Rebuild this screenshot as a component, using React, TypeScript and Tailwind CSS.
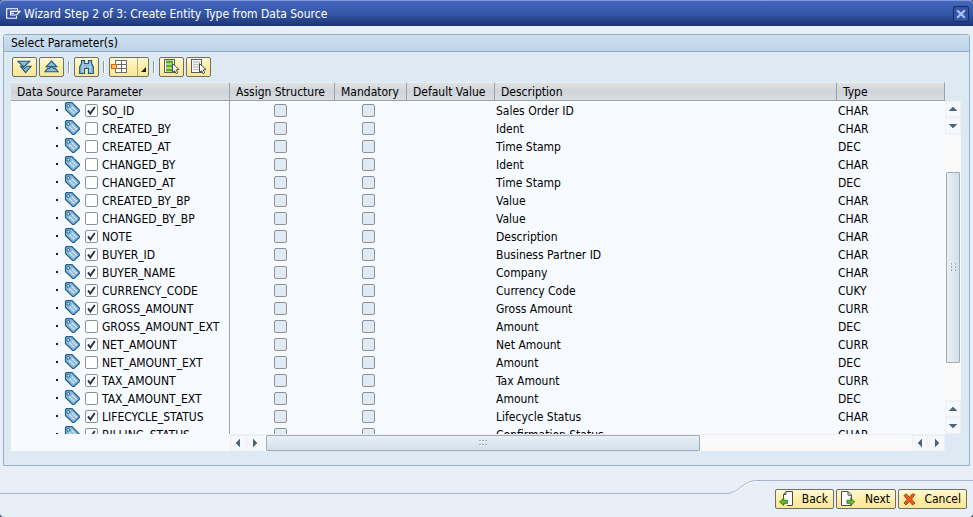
import React from "react";

type Row = { name: string; checked: boolean; description: string; type: string };

const rows: Row[] = [
  { name: "SO_ID", checked: true, description: "Sales Order ID", type: "CHAR" },
  { name: "CREATED_BY", checked: false, description: "Ident", type: "CHAR" },
  { name: "CREATED_AT", checked: false, description: "Time Stamp", type: "DEC" },
  { name: "CHANGED_BY", checked: false, description: "Ident", type: "CHAR" },
  { name: "CHANGED_AT", checked: false, description: "Time Stamp", type: "DEC" },
  { name: "CREATED_BY_BP", checked: false, description: "Value", type: "CHAR" },
  { name: "CHANGED_BY_BP", checked: false, description: "Value", type: "CHAR" },
  { name: "NOTE", checked: true, description: "Description", type: "CHAR" },
  { name: "BUYER_ID", checked: true, description: "Business Partner ID", type: "CHAR" },
  { name: "BUYER_NAME", checked: true, description: "Company", type: "CHAR" },
  { name: "CURRENCY_CODE", checked: true, description: "Currency Code", type: "CUKY" },
  { name: "GROSS_AMOUNT", checked: true, description: "Gross Amount", type: "CURR" },
  { name: "GROSS_AMOUNT_EXT", checked: false, description: "Amount", type: "DEC" },
  { name: "NET_AMOUNT", checked: true, description: "Net Amount", type: "CURR" },
  { name: "NET_AMOUNT_EXT", checked: false, description: "Amount", type: "DEC" },
  { name: "TAX_AMOUNT", checked: true, description: "Tax Amount", type: "CURR" },
  { name: "TAX_AMOUNT_EXT", checked: false, description: "Amount", type: "DEC" },
  { name: "LIFECYCLE_STATUS", checked: true, description: "Lifecycle Status", type: "CHAR" },
  { name: "BILLING_STATUS", checked: true, description: "Confirmation Status", type: "CHAR" },
];

const columns = [
  "Data Source Parameter",
  "Assign Structure",
  "Mandatory",
  "Default Value",
  "Description",
  "Type",
];

const buttonLook =
  "flex h-5 items-center rounded-[2px] border border-[#716f63] bg-linear-to-b from-[#fffbd6] via-[#fdeea6] to-[#fae798]";

function TagIcon() {
  return (
    <svg width="17" height="16" viewBox="0 0 17 16" className="shrink-0">
      <path d="M1.5 1.5 L2.5 0.7 H8 L15.3 8 V9.5 L10 14.4 H8.6 L1.5 7.5 Z" fill="#8db9d8" stroke="#1a6190" strokeWidth="1.2" />
      <circle cx="4.3" cy="3.8" r="1.4" fill="#f4faff" stroke="#1a5a88" strokeWidth="1" />
      <path d="M5.6 6.6 L10.4 11.4 M8 5 L12.8 9.6" stroke="#f4faff" strokeWidth="1.2" strokeDasharray="1.7 0.6" />
    </svg>
  );
}

function DoubleChevron({ up }: { up?: boolean }) {
  return (
    <svg width="15" height="14" viewBox="0 0 15 14" fill="#8fbbd6" stroke="#1b5c86" strokeWidth="1.1">
      {up ? (
        <>
          <path d="M7.5 1 L12.8 6.6 H2.2 Z" />
          <path d="M3.6 8.4 L0.8 11.8 H14.2 L11.4 8.4 H9.6 L7.5 6.4 L5.4 8.4 Z" />
        </>
      ) : (
        <>
          <path d="M0.7 1.2 H12.8 L6.8 7 Z" />
          <path d="M3.4 6.4 H5 L7.4 8.6 L10 6.2 H14.2 L8.6 12.6 Z" />
        </>
      )}
    </svg>
  );
}

function BinocularsIcon() {
  return (
    <svg width="15" height="16" viewBox="0 0 15 16">
      <path d="M2.5 1.5 H5.5 V4.5 H9.5 V1.5 H12.5 V4.5 L14.3 8 V14.5 H9.5 V9.5 H5.5 V14.5 H0.7 V8 L2.5 4.5 Z" fill="#8fbbd6" stroke="#1b5c86" strokeWidth="1.2" />
      <path d="M4 4 V13 M11 4 V13" stroke="#c2dcec" strokeWidth="1" />
    </svg>
  );
}

function LayoutIcon() {
  return (
    <svg width="17" height="14" viewBox="0 0 17 14">
      <path d="M4.5 0.5 H15.5 V12.5 H4.5 Z" fill="#ffffff" />
      <path d="M4 0.5 H16 M4 4.5 H16 M4 8.5 H16 M4 12.5 H16 M4.5 0 V13 M10.5 0 V13 M15.5 0 V13" stroke="#6c6c6c" />
      <rect x="0.5" y="4.5" width="5" height="4" fill="#ffc64a" stroke="#e4601c" />
    </svg>
  );
}

function SelectIcon({ active }: { active?: boolean }) {
  const bar = active ? "#5cae1c" : "#c3c3c3";
  return (
    <svg width="16" height="16" viewBox="0 0 16 16">
      <rect x="0.5" y="0.5" width="10" height="13" fill="#ffffff" stroke="#5c5c5c" />
      <path
        d={active ? "M2 3 H9 M2 7 H9 M2 11 H8" : "M2 3 H9 M2 5.5 H9 M2 8 H8 M2 10.5 H8"}
        stroke={bar}
        strokeWidth={active ? 3 : 1.4}
      />
      <path d="M8.5 4.5 L15 10.5 L12.3 10.8 L13.7 13.8 L12 14.6 L10.6 11.8 L8.5 13.5 Z" fill="#ffffff" stroke="#4c4c4c" />
    </svg>
  );
}

function PageArrowIcon({ back }: { back?: boolean }) {
  return (
    <svg width="16" height="16" viewBox="0 0 16 16">
      {back ? (
        <>
          <path d="M4.5 9 V3.5 L7 0.5 H13.5 V14.5 H8" fill="#ffffff" stroke="#4c4c4c" />
          <path d="M4.5 3.5 H7 V1" fill="none" stroke="#4c4c4c" />
          <path d="M0.6 10.8 L4.8 7.2 V9.3 H8.5 V12.3 H4.8 V14.6 Z" fill="#6ab82c" stroke="#2c7616" strokeWidth="0.9" />
        </>
      ) : (
        <>
          <path d="M1.5 0.5 H8 L11.5 4 V14.5 H1.5 Z" fill="#ffffff" stroke="#4c4c4c" />
          <path d="M8 0.5 V4.2 H11.5" fill="none" stroke="#4c4c4c" />
          <path d="M14.6 10.8 L10.6 7.2 V9.3 H7 V12.3 H10.6 V14.6 Z" fill="#6ab82c" stroke="#2c7616" strokeWidth="0.9" />
        </>
      )}
    </svg>
  );
}

function CancelIcon() {
  return (
    <svg width="13" height="13" viewBox="0 0 13 13">
      <path d="M1 2.5 L3.2 0.8 L6.4 4.2 L9.4 0.8 L12 1.6 L8.6 6.2 L12 10.2 L9.6 12 L6.4 8.6 L3 12 L1 10 L4.2 6.4 Z" fill="#e65a1c" stroke="#b43a12" strokeWidth="0.9" />
    </svg>
  );
}

function Separator() {
  return <span className="mx-1 h-3 w-[2px] border-r border-l border-r-white border-l-[#94999e]" />;
}

function CheckBox({ label, checked, disabled }: { label: string; checked?: boolean; disabled?: boolean }) {
  return (
    <span className="relative block size-[13px] shrink-0">
      <input
        type="checkbox"
        aria-label={label}
        defaultChecked={checked}
        disabled={disabled}
        className="block size-[13px] appearance-none rounded-[2px] border border-[#8f9195] bg-white disabled:bg-[#dfeaf4]"
      />
      {checked && (
        <svg width="13" height="13" viewBox="0 0 13 13" className="pointer-events-none absolute inset-0">
          <path d="M3 6.4 L5.3 9.6 L9.8 3" fill="none" stroke="#2f2f4c" strokeWidth="1.9" />
        </svg>
      )}
    </span>
  );
}

type Direction = "up" | "down" | "left" | "right";

const arrowPaths: Record<Direction, string> = {
  up: "M4 0 L8 4 H0 Z",
  down: "M0 0 H8 L4 4 Z",
  left: "M4 0 V8 L0 4 Z",
  right: "M0 0 L4 4 L0 8 Z",
};

function ScrollButton({ direction }: { direction: Direction }) {
  const vertical = direction === "up" || direction === "down";
  return (
    <button
      type="button"
      aria-label={"Scroll " + direction}
      className="flex size-4 shrink-0 items-center justify-center border border-[#eceff4] bg-[#f5f8fc]"
    >
      <svg width={vertical ? 8 : 4} height={vertical ? 4 : 8} className="shrink-0">
        <path d={arrowPaths[direction]} fill="#4e6474" stroke="#4e6474" strokeWidth="0.6" />
      </svg>
    </button>
  );
}

function Grip() {
  return (
    <svg width="8" height="6" className="shrink-0">
      <path d="M0 0.5 H2 M3 0.5 H5 M6 0.5 H8 M0 4.5 H2 M3 4.5 H5 M6 4.5 H8" stroke="#9db0c2" />
      <path d="M1 1.5 H2 M4 1.5 H5 M7 1.5 H8 M1 5.5 H2 M4 5.5 H5 M7 5.5 H8" stroke="#ffffff" />
    </svg>
  );
}

function TitleBar() {
  return (
    <header className="flex h-[26px] shrink-0 items-center rounded-t-[4px] border-t border-[#7f9ad6] bg-linear-to-b from-[#4468be] via-[#3556a6] to-[#1c3575] pr-1 pl-[6px] text-white">
      <svg width="15" height="11" viewBox="0 0 15 11" fill="none" stroke="#ffffff" strokeWidth="1.1" className="mr-[3px]">
        <path d="M11.5 2.5 V0.7 H0.7 V10.3 H10.5 V8" />
        <path d="M6.5 3.4 H13.8 L10.6 7 H4.6 V3.4 H6.5 M4.6 5.2 H8" />
      </svg>
      <h1 className="flex-1 text-[12px] leading-4">Wizard Step 2 of 3: Create Entity Type from Data Source</h1>
      <button
        type="button"
        aria-label="Close"
        className="flex size-4 items-center justify-center rounded-[2px] border border-[#152c66] bg-[#3355a4]"
      >
        <svg width="10" height="10" viewBox="0 0 10 10">
          <path d="M1.2 1.2 L8.8 8.8 M8.8 1.2 L1.2 8.8" stroke="#a9c4f4" strokeWidth="2.2" />
        </svg>
      </button>
    </header>
  );
}

function Toolbar() {
  return (
    <div className="flex items-center py-[5px] pl-px">
      <button type="button" aria-label="Expand all" className={buttonLook + " w-[25px] justify-center"}>
        <DoubleChevron />
      </button>
      <button type="button" aria-label="Collapse all" className={buttonLook + " ml-[2px] w-[25px] justify-center"}>
        <DoubleChevron up />
      </button>
      <Separator />
      <button type="button" aria-label="Find" className={buttonLook + " w-[25px] justify-center"}>
        <BinocularsIcon />
      </button>
      <Separator />
      <button type="button" aria-label="Layout" className={buttonLook + " w-10 pl-px"}>
        <LayoutIcon />
        <span className="ml-[9px] h-full w-px bg-[#b8ab74]" />
        <svg width="5" height="5" className="mt-1 ml-[3px]">
          <path d="M5 0 V5 H0 Z" fill="#1c1c1c" />
        </svg>
      </button>
      <Separator />
      <button type="button" aria-label="Select all" className={buttonLook + " w-[25px] justify-center"}>
        <SelectIcon active />
      </button>
      <button type="button" aria-label="Deselect all" className={buttonLook + " ml-[2px] w-[25px] justify-center"}>
        <SelectIcon />
      </button>
    </div>
  );
}

function ParameterTable() {
  return (
    <table className="w-full table-fixed border-separate border-spacing-0">
      <colgroup>
        <col className="w-[219px]" />
        <col className="w-[105px]" />
        <col className="w-[72px]" />
        <col className="w-[88px]" />
        <col />
        <col className="w-[108px]" />
      </colgroup>
      <thead>
        <tr>
          {columns.map((column) => (
            <th
              key={column}
              className="h-[19px] border-t border-r border-b border-t-[#eceef0] border-r-[#98a3b1] border-b-[#98a3b1] bg-linear-to-b from-[#dfe2e5] via-[#cfd4da] to-[#dcdee0] p-0 pl-[6px] text-left text-[12px] leading-4 font-normal whitespace-nowrap"
            >
              {column}
            </th>
          ))}
        </tr>
      </thead>
      <tbody>
        {rows.map((row) => (
          <tr key={row.name} className="h-[18px] text-[12px] leading-4">
            <td className="border-r border-[#98a3b1] p-0">
              <label className="flex h-[18px] items-center pl-[45px]">
                <span className="mr-[6px] size-[2px] bg-[#1c1c1c]" />
                <TagIcon />
                <span className="ml-1 flex">
                  <CheckBox label={row.name} checked={row.checked} />
                </span>
                <span className="ml-1 pt-[2px] whitespace-nowrap">{row.name}</span>
              </label>
            </td>
            <td className="p-0">
              <div className="flex justify-center pr-[5px]">
                <CheckBox label={"Assign structure " + row.name} disabled />
              </div>
            </td>
            <td className="p-0">
              <div className="flex justify-center pr-[5px]">
                <CheckBox label={"Mandatory " + row.name} disabled />
              </div>
            </td>
            <td className="p-0" />
            <td className="p-0 pt-[2px] pl-px whitespace-nowrap">{row.description}</td>
            <td className="p-0 pt-[2px] pl-px whitespace-nowrap">{row.type}</td>
          </tr>
        ))}
      </tbody>
    </table>
  );
}

function VerticalScrollBar() {
  return (
    <div className="mt-[19px] flex w-4 flex-col gap-px bg-[#f0f3f7]">
      <ScrollButton direction="up" />
      <ScrollButton direction="down" />
      <div className="flex min-h-0 flex-1 flex-col bg-[#fafafa] px-px">
        <div className="h-[14%] shrink-0" />
        <div className="flex h-[72%] shrink-0 items-center justify-center rounded-[1px] border border-[#9fadbb] bg-linear-to-r from-[#e9f0f6] to-[#d3dfe9]">
          <span className="rotate-90">
            <Grip />
          </span>
        </div>
      </div>
      <ScrollButton direction="up" />
      <ScrollButton direction="down" />
    </div>
  );
}

function HorizontalScrollBar() {
  return (
    <div className="mr-4 flex h-[17px] shrink-0 bg-[#f7fbff] pl-[219px]">
      <div className="flex flex-1 gap-px border-t border-[#eceff4]">
        <ScrollButton direction="left" />
        <ScrollButton direction="right" />
        <div className="flex flex-1 bg-[#fafafa] pl-[2px]">
          <div className="flex w-[67.3%] items-center justify-center rounded-[1px] border border-[#9fadbb] bg-linear-to-b from-[#e9f0f6] to-[#d3dfe9]">
            <Grip />
          </div>
        </div>
        <ScrollButton direction="left" />
        <ScrollButton direction="right" />
      </div>
    </div>
  );
}

function Footer() {
  return (
    <footer className="shrink-0 pt-[14px] pb-2">
      <div className="flex h-[14px]">
        <div className="flex-1 border-b border-[#a9b4c8]" />
        <svg width="32" height="14" viewBox="0 0 32 14" fill="none">
          <path d="M0 14.5 C8 14.5 12 10 17 6.5 C22 3.5 24 1.5 32 1.5" stroke="#ffffff" />
          <path d="M0 13.5 C8 13.5 12 9 17 5.5 C22 2.5 24 0.5 32 0.5" stroke="#a9b4c8" />
        </svg>
        <div className="w-[215px] border-t border-[#a9b4c8]" />
      </div>
      <div className="-mt-[5px] flex justify-end gap-[2px] pr-[6px] text-[12px] leading-4">
        <button type="button" className={buttonLook + " w-[59px] justify-between pr-[5px] pl-[3px]"}>
          <PageArrowIcon back />
          Back
        </button>
        <button type="button" className={buttonLook + " w-[60px] justify-between pr-[5px] pl-[3px]"}>
          <PageArrowIcon />
          Next
        </button>
        <button type="button" className={buttonLook + " w-[69px] justify-between pr-[5px] pl-[4px]"}>
          <CancelIcon />
          Cancel
        </button>
      </div>
    </footer>
  );
}

export default function App() {
  return (
    <div className="h-screen bg-[#34466e] font-['DejaVu_Sans_Condensed','Noto_Sans',sans-serif] text-[12px] text-black">
      <div className="flex h-full flex-col overflow-hidden rounded-[4px] bg-[#e8eff7]">
        <TitleBar />
        <main className="mx-[3px] mt-2 flex min-h-0 flex-1 flex-col rounded-t-[3px] border border-[#93b0cb] bg-[#deeaf3]">
          <h2 className="h-[17px] shrink-0 rounded-t-[2px] border-b border-[#93b0cb] bg-linear-to-b from-[#cfe0ef] to-[#bdd4e8] pl-[7px] text-[12px] leading-4">
            Select Parameter(s)
          </h2>
          <div className="flex min-h-0 flex-1 flex-col pr-2 pb-[14px] pl-[7px]">
            <Toolbar />
            <div className="flex min-h-0 flex-1">
              <div className="min-w-0 flex-1 overflow-hidden bg-[#f7fbff]">
                <ParameterTable />
              </div>
              <VerticalScrollBar />
            </div>
            <HorizontalScrollBar />
          </div>
        </main>
        <Footer />
      </div>
    </div>
  );
}
